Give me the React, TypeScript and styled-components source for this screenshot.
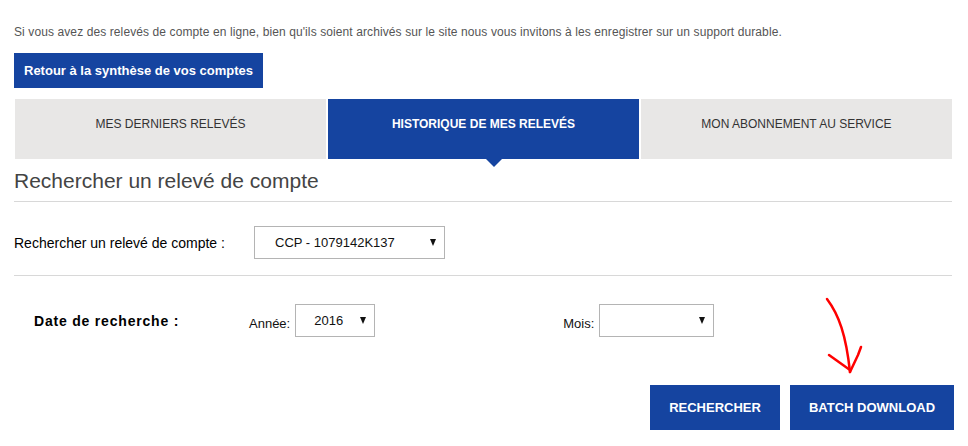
import React from 'react';
import styled, { createGlobalStyle } from 'styled-components';

const GlobalStyle = createGlobalStyle`
	body {
		margin: 0;
		background: #fff;
		font-family: 'Liberation Sans', Arial, sans-serif;
	}
`;

const blue = '#1544a0';

const Page = styled.div`
	position: relative;
	width: 940px;
	padding: 24px 14px 16px;
`;

const Intro = styled.p`
	margin: 0 0 13px;
	font-size: 12px;
	line-height: 16px;
	letter-spacing: 0.1px;
	color: #555;
`;

const BackButton = styled.button`
	display: block;
	height: 35px;
	padding: 0 10px;
	border: none;
	background: ${blue};
	color: #fff;
	font: bold 13px 'Liberation Sans', Arial, sans-serif;
	cursor: pointer;
`;

const Tabs = styled.div`
	display: grid;
	grid-template-columns: repeat(3, 311px);
	gap: 2px;
	margin: 11px 0 0 1px;
`;

const Tab = styled.div<{ $active?: boolean }>`
	position: relative;
	height: 60px;
	box-sizing: border-box;
	padding-top: 17px;
	text-align: center;
	font-size: 12px;
	line-height: 16px;
	text-transform: uppercase;
	background: ${(p) => (p.$active ? blue : '#e8e7e6')};
	color: ${(p) => (p.$active ? '#fff' : '#333')};
	font-weight: ${(p) => (p.$active ? 'bold' : 'normal')};

	&::after {
		content: '';
		display: ${(p) => (p.$active ? 'block' : 'none')};
		position: absolute;
		left: calc(50% + 10px);
		bottom: -8px;
		margin-left: -8px;
		border-left: 8px solid transparent;
		border-right: 8px solid transparent;
		border-top: 8px solid ${blue};
	}
`;

const Heading = styled.h2`
	margin: 10px 0 8px;
	font-size: 21px;
	line-height: 24px;
	font-weight: normal;
	color: #444;
`;

const Rule = styled.hr`
	margin: 0;
	border: none;
	border-top: 1px solid #d8d8d8;
	width: 938px;
`;

const AccountRow = styled.div`
	display: flex;
	align-items: center;
	margin: 24px 0 16px;
`;

const Label = styled.span<{ $width?: number }>`
	width: ${(p) => (p.$width ? `${p.$width}px` : 'auto')};
	font-size: 14px;
	color: #000;
`;

const DateLabel = styled.span`
	width: 215px;
	padding-left: 20px;
	font-size: 14px;
	font-weight: bold;
	letter-spacing: 0.8px;
	color: #000;
`;

const SmallLabel = styled.span`
	align-self: flex-end;
	margin: 0 5px 6px 0;
	font-size: 13px;
	color: #111;
`;

const Select = styled.div<{ $width: number; $pad: number }>`
	display: flex;
	align-items: center;
	justify-content: space-between;
	width: ${(p) => p.$width}px;
	height: 33px;
	box-sizing: border-box;
	padding: 0 8px 0 ${(p) => p.$pad}px;
	border: 1px solid #b4b4b4;
	background: #fff;
	font-size: 13px;
	color: #111;
`;

const Caret = styled.span`
	width: 0;
	height: 0;
	border-left: 3.5px solid transparent;
	border-right: 3.5px solid transparent;
	border-top: 7px solid #111;
`;

const DateRow = styled.div`
	display: flex;
	align-items: center;
	margin-top: 28px;
`;

const Spacer = styled.div<{ $w: number }>`
	width: ${(p) => p.$w}px;
`;

const Actions = styled.div`
	display: flex;
	justify-content: flex-end;
	gap: 10px;
	margin-top: 48px;
`;

const ActionButton = styled.button<{ $width: number }>`
	width: ${(p) => p.$width}px;
	height: 45px;
	border: none;
	background: ${blue};
	color: #fff;
	font: bold 13px 'Liberation Sans', Arial, sans-serif;
	cursor: pointer;
`;

const Annotation = styled.svg`
	position: absolute;
	left: 815px;
	top: 290px;
	width: 60px;
	height: 90px;
	pointer-events: none;
`;

const Dropdown: React.FC<{ width: number; pad: number; value?: string }> = ({ width, pad, value }) => (
	<Select $width={width} $pad={pad}>
		<span>{value}</span>
		<Caret />
	</Select>
);

export default function App() {
	return (
		<>
			<GlobalStyle />
			<Page>
				<Intro>
					Si vous avez des relevés de compte en ligne, bien qu'ils soient archivés sur le site nous vous invitons à
					les enregistrer sur un support durable.
				</Intro>
				<BackButton>Retour à la synthèse de vos comptes</BackButton>
				<Tabs>
					<Tab>Mes derniers relevés</Tab>
					<Tab $active>Historique de mes relevés</Tab>
					<Tab>Mon abonnement au service</Tab>
				</Tabs>
				<Heading>Rechercher un relevé de compte</Heading>
				<Rule />
				<AccountRow>
					<Label $width={240}>Rechercher un relevé de compte :</Label>
					<Dropdown width={191} pad={20} value="CCP - 1079142K137" />
				</AccountRow>
				<Rule />
				<DateRow>
					<DateLabel>Date de recherche :</DateLabel>
					<SmallLabel>Année:</SmallLabel>
					<Dropdown width={80} pad={18} value="2016" />
					<Spacer $w={188} />
					<SmallLabel>Mois:</SmallLabel>
					<Dropdown width={115} pad={10} />
				</DateRow>
				<Actions>
					<ActionButton $width={130}>RECHERCHER</ActionButton>
					<ActionButton $width={164}>BATCH DOWNLOAD</ActionButton>
				</Actions>
				<Annotation viewBox="0 0 60 90">
					<g fill="none" stroke="#f00" strokeWidth="2.5" strokeLinecap="round" strokeLinejoin="round">
						<path d="M12 9 C 24 25, 31 45, 35 82" />
						<path d="M14 65 L 35 80" />
						<path d="M46 57 L 43 65 L 35 82" />
					</g>
				</Annotation>
			</Page>
		</>
	);
}
